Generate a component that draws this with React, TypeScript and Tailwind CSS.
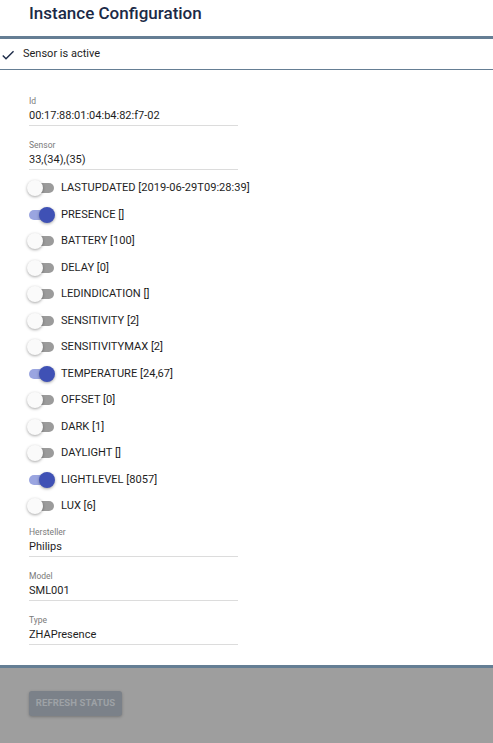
import React from "react";

const switches: { label: string; on: boolean }[] = [
  { label: "LASTUPDATED [2019-06-29T09:28:39]", on: false },
  { label: "PRESENCE []", on: true },
  { label: "BATTERY [100]", on: false },
  { label: "DELAY [0]", on: false },
  { label: "LEDINDICATION []", on: false },
  { label: "SENSITIVITY [2]", on: false },
  { label: "SENSITIVITYMAX [2]", on: false },
  { label: "TEMPERATURE [24,67]", on: true },
  { label: "OFFSET [0]", on: false },
  { label: "DARK [1]", on: false },
  { label: "DAYLIGHT []", on: false },
  { label: "LIGHTLEVEL [8057]", on: true },
  { label: "LUX [6]", on: false },
];

function Field({ label, value, className = "" }: { label: string; value: string; className?: string }) {
  return (
    <div className={"w-[209px] border-b border-[#dcdcdc] " + className}>
      <div className="h-[11px] text-[8.5px] leading-[11px] text-[#7a7a7a]">{label}</div>
      <div className="h-[18px] text-[11px] leading-[18px] text-[#1e1e1e]">{value}</div>
    </div>
  );
}

function Toggle({ on }: { on: boolean }) {
  return (
    <div className="relative w-[28px] h-[16px] ml-[-2px] shrink-0">
      <div
        className={
          "absolute left-[2px] right-[1px] top-[3px] h-[10px] rounded-full " +
          (on ? "bg-[#9aa5e0]" : "bg-[#9b9b9b]")
        }
      />
      <div
        className={
          "absolute top-0 w-[16px] h-[16px] rounded-full shadow-[0_1px_3px_rgba(0,0,0,0.35)] " +
          (on ? "right-0 bg-[#3f51b5]" : "left-0 bg-[#fafafa]")
        }
      />
    </div>
  );
}

export default function App() {
  return (
    <div
      className="w-[493px] h-[743px] flex flex-col bg-white overflow-hidden"
      style={{ fontFamily: "Roboto, 'Liberation Sans', sans-serif" }}
    >
      <div className="h-[36px] pt-[3px] pl-[29px]">
        <div className="text-[17px] leading-[20px] font-medium text-[#1b2a47]">Instance Configuration</div>
      </div>
      <div className="h-[3px] bg-[#657e94]" />
      <div className="h-[31px] flex items-center border-b border-[#657e94]">
        <svg width="16" height="16" viewBox="0 0 24 24" className="ml-[0px] mt-[1px]">
          <path d="M9 16.17L4.83 12l-1.42 1.41L9 19 21 7l-1.41-1.41z" fill="#1b2a47" />
        </svg>
        <span className="ml-[7px] text-[11px] leading-[16px] text-[#1e1e1e]">Sensor is active</span>
      </div>
      <div className="pl-[29px] pt-[26px]">
        <Field label="Id" value="00:17:88:01:04:b4:82:f7-02" />
        <Field label="Sensor" value="33,(34),(35)" className="mt-[14px]" />
        <div className="mt-[5px] flex flex-col">
          {switches.map((s) => (
            <div key={s.label} className="h-[26.5px] flex items-center">
              <Toggle on={s.on} />
              <span className="ml-[6px] text-[11.1px] leading-[14px] text-[#1e1e1e]">{s.label}</span>
            </div>
          ))}
        </div>
        <Field label="Hersteller" value="Philips" className="mt-[7px]" />
        <Field label="Model" value="SML001" className="mt-[14px]" />
        <Field label="Type" value="ZHAPresence" className="mt-[14px]" />
      </div>
      <div className="flex-1" />
      <div className="h-[3px] bg-[#657e94]" />
      <div className="h-[75px] bg-[#9e9e9e] pl-[29px] pt-[23px]">
        <div className="w-[93px] h-[25px] rounded-[3px] bg-[#7b8189] shadow-[0_1px_3px_rgba(0,0,0,0.25)] flex items-center justify-center">
          <span className="text-[9.5px] font-bold text-[#9ea2a6] tracking-[0.1px]">REFRESH STATUS</span>
        </div>
      </div>
    </div>
  );
}
